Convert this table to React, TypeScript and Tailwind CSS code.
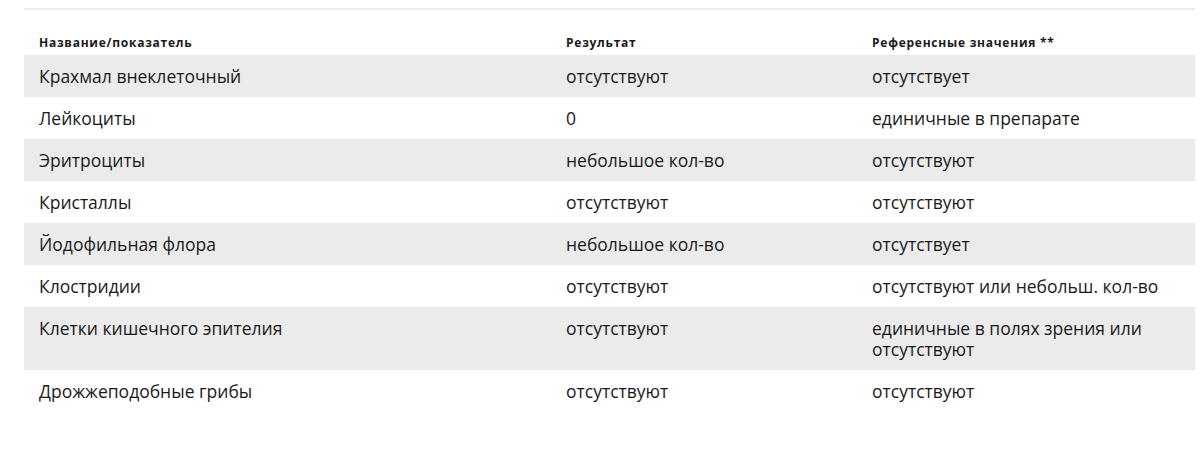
const rows: [string, string, string][] = [
  ["Крахмал внеклеточный", "отсутствуют", "отсутствует"],
  ["Лейкоциты", "0", "единичные в препарате"],
  ["Эритроциты", "небольшое кол-во", "отсутствуют"],
  ["Кристаллы", "отсутствуют", "отсутствуют"],
  ["Йодофильная флора", "небольшое кол-во", "отсутствует"],
  ["Клостридии", "отсутствуют", "отсутствуют или небольш. кол-во"],
  ["Клетки кишечного эпителия", "отсутствуют", "единичные в полях зрения или отсутствуют"],
  ["Дрожжеподобные грибы", "отсутствуют", "отсутствуют"],
];

export default function App() {
  return (
    <div className="w-[1200px] h-[471px] bg-white pl-[24px] pr-[5px] pt-[8px] font-['Open_Sans',sans-serif] text-[#1a1a1a]">
      <div className="border-t-2 border-[#ececec]">
        <div className="grid grid-cols-[527px_306px_1fr] pt-[26px] pb-[5px] text-[12px] font-bold leading-[14px] tracking-[0.75px]">
          <div className="px-[15px]">Название/показатель</div>
          <div className="px-[15px]">Результат</div>
          <div className="px-[15px]">Референсные значения **</div>
        </div>
        {rows.map((r, i) => (
          <div
            key={r[0]}
            className={`grid grid-cols-[527px_306px_1fr] py-[10.5px] text-[17.5px] leading-[21px] ${i % 2 === 0 ? "bg-[#ebebeb]" : "bg-white"}`}
          >
            <div className="px-[15px]">{r[0]}</div>
            <div className="px-[15px]">{r[1]}</div>
            <div className="px-[15px] pr-[20px]">{r[2]}</div>
          </div>
        ))}
      </div>
    </div>
  );
}
